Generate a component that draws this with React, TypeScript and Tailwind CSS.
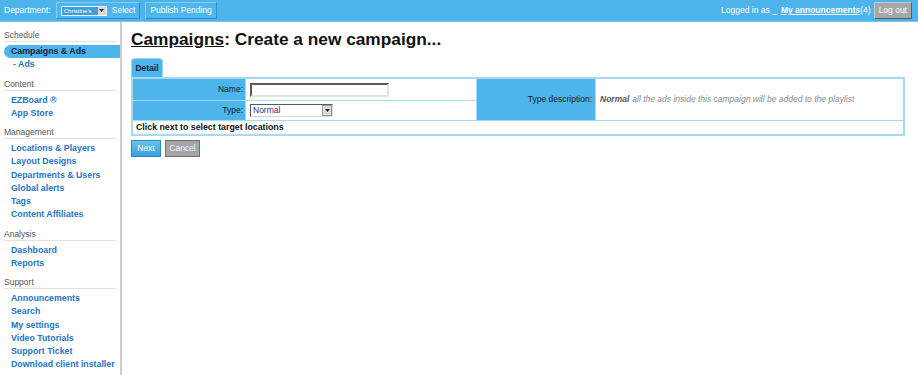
import React from "react";

const font = { fontFamily: "'Liberation Sans', Arial, Helvetica, sans-serif" };

function SectionHeader({ title, first }: { title: string; first?: boolean }) {
  return (
    <div className={`${first ? "" : "mt-[6px]"} mx-[4px] border-b border-[#e2e2e2] text-[8.5px] leading-[12px] text-[#555555]`}>
      {title}
    </div>
  );
}

function Item({ label, active, indent }: { label: string; active?: boolean; indent?: boolean }) {
  if (active) {
    return (
      <div className="ml-[4px] h-[13.25px] rounded-l-full bg-[#4db4ec] pl-[7px] text-[8.8px] font-bold leading-[13.25px] text-[#10243a]">
        {label}
      </div>
    );
  }
  return (
    <div className={`${indent ? "pl-[13px]" : "pl-[11px]"} h-[13.25px] text-[8.8px] font-bold leading-[13.25px] text-[#1f74c6]`}>
      {label}
    </div>
  );
}

export default function App() {
  return (
    <div style={font} className="flex h-[375px] w-[918px] flex-col overflow-hidden bg-white">
      {/* Top bar */}
      <div className="flex h-[22px] shrink-0 items-center justify-between border-b border-[#7fc6ee] bg-[#4cb3eb] pl-[4px] pr-[6px] text-[8.5px] text-white">
        <div className="flex items-center">
          <span className="mr-[5px]">Department:</span>
          <div className="flex h-[17px] items-center border border-t-[#86cdf4] border-l-[#86cdf4] border-b-[#2f8fca] border-r-[#2f8fca] bg-[#4fb6ed] pl-[4px] pr-[4px]">
            <div className="flex h-[10px] w-[46px] items-center border border-[#e8f5fc] bg-[#3e9fd9]">
              <span className="flex-1 overflow-hidden whitespace-nowrap pl-[2px] text-[6px] leading-[8px] text-white">Christine's</span>
              <span className="flex h-[8px] w-[8px] items-center justify-center bg-[#d8d8d8]">
                <svg width="5" height="3" viewBox="0 0 5 3"><path d="M0 0h5L2.5 3z" fill="#222" /></svg>
              </span>
            </div>
            <span className="ml-[5px]">Select</span>
          </div>
          <div className="ml-[5px] flex h-[17px] items-center border border-t-[#86cdf4] border-l-[#86cdf4] border-b-[#2f8fca] border-r-[#2f8fca] bg-[#4fb6ed] px-[4px]">
            Publish Pending
          </div>
        </div>
        <div className="flex items-center">
          <span>Logged in as _</span>
          <span className="ml-[4px] font-bold underline">My announcements</span>
          <span>(4)</span>
          <div className="ml-[3px] flex h-[17px] items-center border border-t-[#c8c8c8] border-l-[#c8c8c8] border-b-[#5e5e5e] border-r-[#5e5e5e] bg-[#a7a7a7] px-[4px] text-white">
            Log out
          </div>
        </div>
      </div>

      <div className="flex flex-1">
        {/* Sidebar */}
        <div className="w-[122px] shrink-0 border-r-2 border-[#cdcdcd] pt-[7px]">
          <SectionHeader title="Schedule" first />
          <div className="pt-[3px]">
            <Item label="Campaigns & Ads" active />
            <Item label="- Ads" indent />
          </div>
          <SectionHeader title="Content" />
          <div className="pt-[3px]">
            <Item label="EZBoard ®" />
            <Item label="App Store" />
          </div>
          <SectionHeader title="Management" />
          <div className="pt-[3px]">
            <Item label="Locations & Players" />
            <Item label="Layout Designs" />
            <Item label="Departments & Users" />
            <Item label="Global alerts" />
            <Item label="Tags" />
            <Item label="Content Affiliates" />
          </div>
          <SectionHeader title="Analysis" />
          <div className="pt-[3px]">
            <Item label="Dashboard" />
            <Item label="Reports" />
          </div>
          <SectionHeader title="Support" />
          <div className="pt-[3px]">
            <Item label="Announcements" />
            <Item label="Search" />
            <Item label="My settings" />
            <Item label="Video Tutorials" />
            <Item label="Support Ticket" />
            <Item label="Download client installer" />
          </div>
        </div>

        {/* Main */}
        <div className="flex-1 pl-[9px] pr-[13px] pt-[7px]">
          <h1 className="text-[17.3px] font-bold leading-[20px] text-[#111111]">
            <span className="underline">Campaigns</span>: Create a new campaign...
          </h1>

          <div className="mt-[9px] flex">
            <div className="flex h-[19px] w-[32px] items-center justify-center rounded-t-[4px] border border-b-0 border-[#9fd5f5] bg-[#4db4ec] text-[8.5px] font-bold text-[#10243a]">
              Detail
            </div>
          </div>

          <div className="grid grid-cols-[112px_230px_118px_1fr] grid-rows-[21px_19px_13px] gap-[1px] border-2 border-[#a6d9f6] bg-[#a6d9f6]">
            <div className="flex items-center justify-end bg-[#4db4ec] pr-[2px] text-[8.5px] text-[#1a1a1a]">Name:</div>
            <div className="flex items-center bg-white pl-[4px]">
              <div className="h-[14px] w-[139px] border-2 border-t-[#5a5a5a] border-l-[#5a5a5a] border-b-[#e4e2dc] border-r-[#e4e2dc] bg-white" />
            </div>
            <div className="row-span-2 flex items-center justify-end bg-[#4db4ec] pr-[3px] text-[8.5px] text-[#1a1a1a]">Type description:</div>
            <div className="row-span-2 flex items-center bg-white pl-[4px] text-[8.5px] italic text-[#8a8a8a]">
              <span className="font-bold text-[#555555]">Normal</span>
              <span className="ml-[3px]">all the ads inside this campaign will be added to the playlist</span>
            </div>
            <div className="flex items-center justify-end bg-[#4db4ec] pr-[2px] text-[8.5px] text-[#1a1a1a]">Type:</div>
            <div className="flex items-center bg-white pl-[4px]">
              <div className="flex h-[13px] w-[83px] items-center border border-t-[#5a5a5a] border-l-[#5a5a5a] border-b-[#d8d6d0] border-r-[#d8d6d0] bg-white">
                <span className="flex-1 pl-[2px] text-[8.5px] leading-[11px] text-[#4a2a78]">Normal</span>
                <span className="flex h-[11px] w-[10px] items-center justify-center border border-[#9a9a9a] bg-[#dcdcdc]">
                  <svg width="5" height="3" viewBox="0 0 5 3"><path d="M0 0h5L2.5 3z" fill="#111" /></svg>
                </span>
              </div>
            </div>
            <div className="col-span-4 flex items-center bg-white pl-[3px] text-[8.8px] font-bold text-[#111111]">
              Click next to select target locations
            </div>
          </div>

          <div className="mt-[4px] flex gap-[4px]">
            <div className="flex h-[17px] w-[30px] items-center justify-center border border-[#2f85bf] bg-gradient-to-b from-[#66c0f0] to-[#3c9fd9] text-[8.5px] text-white">
              Next
            </div>
            <div className="flex h-[17px] w-[35px] items-center justify-center border border-[#707070] bg-[#a5a5a5] text-[8.5px] text-[#f2f2f2]">
              Cancel
            </div>
          </div>
        </div>
      </div>
    </div>
  );
}
